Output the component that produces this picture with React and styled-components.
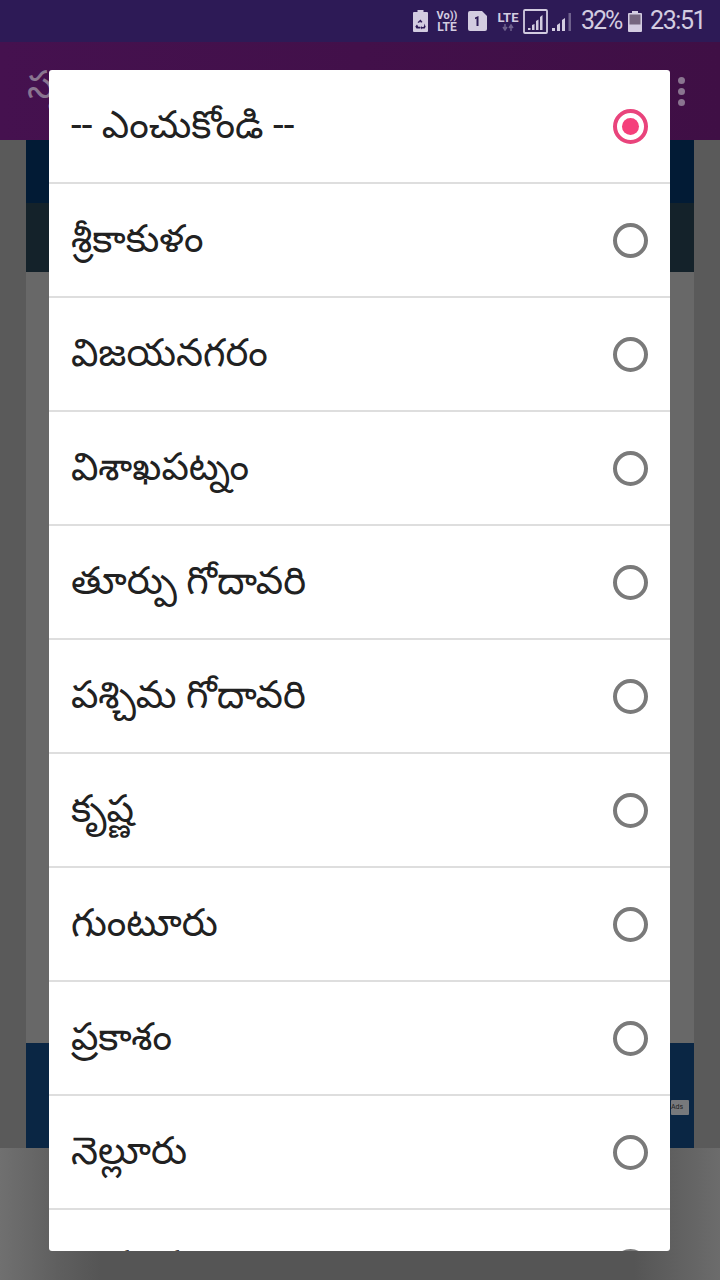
import React from "react";
import styled, { createGlobalStyle } from "styled-components";

const GlobalStyle = createGlobalStyle`
  html, body {
    margin: 0;
    padding: 0;
    background: #5a5a5a;
  }
  * { box-sizing: border-box; }
`;

const Screen = styled.div`
  position: relative;
  width: 720px;
  height: 1280px;
  overflow: hidden;
  display: flex;
  flex-direction: column;
  font-family: Roboto, "Noto Sans", sans-serif;
`;

const StatusBar = styled.div`
  height: 42px;
  background: #2d1a56;
  display: flex;
  align-items: center;
  justify-content: flex-end;
  padding: 0 16px 0 0;
  color: #d3cce0;
`;

const StatusText = styled.span`
  width: ${(p) => p.$w}px;
  font-size: 25px;
  letter-spacing: ${(p) => p.$track}px;
  line-height: 42px;
  white-space: nowrap;
  margin-left: ${(p) => p.$gap || 0}px;
`;

const TinyStack = styled.span`
  width: ${(p) => p.$w}px;
  display: flex;
  flex-direction: column;
  align-items: center;
  font-weight: 700;
  margin-left: ${(p) => p.$gap || 0}px;
`;

const TinyLine = styled.span`
  font-size: ${(p) => p.$size || 11}px;
  line-height: ${(p) => p.$size || 11}px;
  white-space: nowrap;
`;

const IconSlot = styled.svg`
  display: block;
  flex: none;
  margin-left: ${(p) => p.$gap || 0}px;
`;

const AppBar = styled.div`
  height: 98px;
  background: linear-gradient(90deg, #45114f 0%, #3f0f45 100%);
  display: flex;
  align-items: center;
  justify-content: space-between;
  padding: 0 35px 12px 27px;
`;

const AppTitle = styled.div`
  color: #8a7590;
  font-size: 38px;
  line-height: 50px;
  font-family: Roboto, "Noto Sans Telugu", "Noto Sans", sans-serif;
`;

const MenuDots = styled.div`
  display: flex;
  flex-direction: column;
  gap: 4px;
  padding-top: 12px;
`;

const Dot = styled.span`
  width: 7px;
  height: 7px;
  border-radius: 50%;
  background: #8a7590;
`;

const Backdrop = styled.div`
  flex: 1;
  display: flex;
  flex-direction: column;
  background: #5a5a5a;
`;

const Page = styled.div`
  height: 1008px;
  margin: 0 26px;
  display: flex;
  flex-direction: column;
`;

const NavyBand = styled.div`
  height: 63px;
  background: #021b35;
`;

const DarkBand = styled.div`
  height: 69px;
  background: #14222a;
`;

const PageBody = styled.div`
  flex: 1;
  background: #686868;
`;

const FooterBand = styled.div`
  height: 105px;
  background: #0a2644;
  display: flex;
  align-items: center;
  justify-content: flex-end;
  padding: 24px 5px 0 0;
`;

const AdBadge = styled.span`
  width: 18px;
  height: 15px;
  background: #77797c;
  border-radius: 1px;
  color: #222;
  font-size: 7px;
  line-height: 15px;
`;

const BottomArea = styled.div`
  flex: 1;
  background: linear-gradient(90deg, #707070 0%, #5f5f5f 8%, #555 14%, #555 88%, #6c6c6c 100%);
`;

const Dialog = styled.div`
  position: absolute;
  left: 49px;
  top: 70px;
  width: 621px;
  height: 1181px;
  background: #fff;
  border-radius: 3px;
  overflow: hidden;
`;

const Option = styled.div`
  height: 114px;
  display: flex;
  align-items: center;
  justify-content: space-between;
  padding: 0 22px;
  border-bottom: 2px solid #dedede;
`;

const OptionLabel = styled.span`
  font-family: Roboto, "Noto Sans Telugu", "Noto Sans", sans-serif;
  font-size: 38.5px;
  line-height: 54px;
  padding-bottom: 2px;
  color: #212121;
  white-space: nowrap;
`;

const Radio = styled.span`
  width: 35px;
  height: 35px;
  border-radius: 50%;
  border: 4px solid ${(p) => (p.$checked ? "#e9447c" : "#7a7a7a")};
  display: flex;
  align-items: center;
  justify-content: center;
  flex: none;
  &::after {
    content: "";
    display: ${(p) => (p.$checked ? "block" : "none")};
    width: 17px;
    height: 17px;
    border-radius: 50%;
    background: #f53f7b;
  }
`;

const districts = [
  "-- ఎంచుకోండి --",
  "శ్రీకాకుళం",
  "విజయనగరం",
  "విశాఖపట్నం",
  "తూర్పు గోదావరి",
  "పశ్చిమ గోదావరి",
  "కృష్ణ",
  "గుంటూరు",
  "ప్రకాశం",
  "నెల్లూరు",
  "చిత్తూరు",
];

const App = () => (
  <Screen>
    <GlobalStyle />
    <StatusBar>
      <IconSlot width="15" height="22" viewBox="0 0 15 22">
        <path d="M4.500 0h6v2H14a1 1 0 0 1 1 1v18a1 1 0 0 1-1 1H1a1 1 0 0 1-1-1V3a1 1 0 0 1 1-1h3.500z" fill="#d3cce0" />
        <path d="M7.500 9.500l2 2.500-1.500.8-1-1.300-1 1.600-1.500-.8zM4 14.500l1.300 2.300h2v1.700H3.500L2.300 16.500zM11 13.500l1.700 3-1 2H9v1l-1.500-1.700L9 16v1h1.500l.7-1.200z" fill="#2d1a56" />
      </IconSlot>
      <TinyStack $w={20} $gap={9}>
        <TinyLine $size={11}>Vo))</TinyLine>
        <TinyLine $size={12}>LTE</TinyLine>
      </TinyStack>
      <IconSlot $gap={11} width="19" height="20" viewBox="0 0 19 20">
        <path d="M2 0h12l5 5v13a2 2 0 0 1-2 2H2a2 2 0 0 1-2-2V2a2 2 0 0 1 2-2z" fill="#d3cce0" />
        <path d="M7 6.500l3.500-1.500V15H8.500V7.500L7 8.200z" fill="#2d1a56" />
      </IconSlot>
      <TinyStack $w={22} $gap={10}>
        <TinyLine $size={13}>LTE</TinyLine>
        <IconSlot width="12" height="7" viewBox="0 0 12 7">
          <path d="M3 0v5M1 3l2 3 2-3M9 7V2M7 4l2-3 2 3" fill="none" stroke="#d3cce0" strokeOpacity="0.4" strokeWidth="1.500" />
        </IconSlot>
      </TinyStack>
      <IconSlot $gap={4} width="25" height="25" viewBox="0 0 25 25">
        <rect x="1" y="1" width="23" height="23" rx="1" fill="none" stroke="#d3cce0" strokeWidth="1.800" />
        <path d="M5 19h2.500v2H5zM9 16l2.500-1v6H9zM13 12l2.500-1.500V21H13zM17 8l2.500-2v15H17z" fill="#d3cce0" />
      </IconSlot>
      <IconSlot $gap={4} width="20" height="22" viewBox="0 0 20 22">
        <path d="M0 18h3v3H0zM5 15l3-2v8H5zM10 10l3-2v13h-3z" fill="#d3cce0" />
        <path d="M16.500 3h2.500v18h-2.500z" fill="#d3cce0" opacity="0.4" />
      </IconSlot>
      <StatusText $w={40} $track={-2} $gap={9}>32%</StatusText>
      <IconSlot $gap={7} width="14" height="21" viewBox="0 0 14 21">
        <path d="M4 0h6v2h3a1 1 0 0 1 1 1v17a1 1 0 0 1-1 1H1a1 1 0 0 1-1-1V3a1 1 0 0 1 1-1h3z" fill="#d3cce0" />
        <rect x="1.500" y="3.500" width="11" height="10" fill="#75667f" />
      </IconSlot>
      <StatusText $w={54} $track={-1.4} $gap={8}>23:51</StatusText>
    </StatusBar>
    <AppBar>
      <AppTitle>స్వ</AppTitle>
      <MenuDots>
        <Dot />
        <Dot />
        <Dot />
      </MenuDots>
    </AppBar>
    <Backdrop>
      <Page>
        <NavyBand />
        <DarkBand />
        <PageBody />
        <FooterBand>
          <AdBadge>Ads</AdBadge>
        </FooterBand>
      </Page>
      <BottomArea />
    </Backdrop>
    <Dialog>
      {districts.map((name, index) => (
        <Option key={name}>
          <OptionLabel>{name}</OptionLabel>
          <Radio $checked={index === 0} />
        </Option>
      ))}
    </Dialog>
  </Screen>
);

export default App;
